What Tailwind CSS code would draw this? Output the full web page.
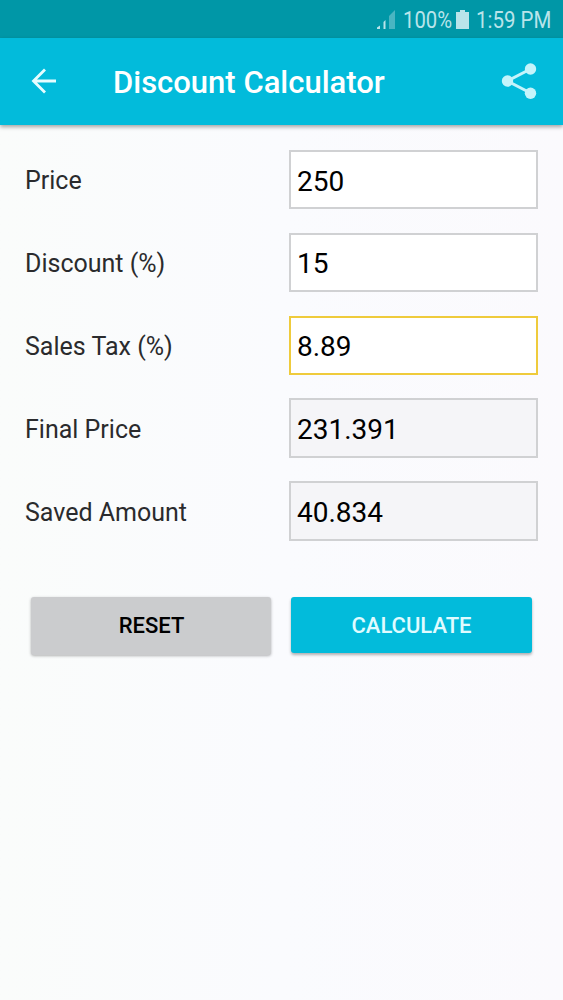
<!DOCTYPE html>
<html lang="en">
<head>
  <meta charset="UTF-8"/>
  <meta name="viewport" content="width=device-width, initial-scale=1.0"/>
  <title>Discount Calculator</title>
  <script src="https://cdn.jsdelivr.net/npm/@tailwindcss/browser@4"></script>
</head>
<body class="flex h-screen flex-col overflow-hidden bg-linear-to-r from-[#fafcfb] via-[#fafbfe] to-[#fbfafd] font-['Roboto',sans-serif] text-black">

  <!-- Status bar -->
  <div class="flex h-[38px] shrink-0 items-center justify-end bg-[#0097a7] pr-3 text-[#b9e4ea]">
    <svg class="mt-[2px] mr-[7px] h-[20px] w-[20px]" viewBox="0 0 20 20" fill="currentColor">
      <path d="M1 19v-1.500l3-2V19zM7.500 19v-7l2-2v9z"/>
      <path class="opacity-40" d="M13 19V6l6-6v19z"/>
    </svg>
    <span class="mt-[3px] w-[49px] origin-left scale-x-[0.88] text-[23px] leading-none whitespace-nowrap">100%</span>
    <svg class="mt-[1px] mr-[7px] ml-[4px] h-[19px] w-[13px]" viewBox="0 0 13 19" fill="currentColor">
      <path d="M4 0h5v2h4v17H0V2h4z"/>
    </svg>
    <span class="mt-[3px] w-[75px] origin-left scale-x-[0.89] text-[23px] leading-none whitespace-nowrap">1:59 PM</span>
  </div>

  <!-- App bar -->
  <header class="flex h-[87px] shrink-0 items-center bg-[#02bbdb] pr-[26px] pl-[31px] text-white shadow-[0_2px_4px_rgba(0,0,0,0.35)]">
    <svg class="mb-[1px] h-[26px] w-[26px]" viewBox="0 0 26 26" fill="none" stroke="#e6fdff" stroke-width="2.800">
      <path d="M25 13H2.500M14 1.500 2.500 13 14 24.500"/>
    </svg>
    <h1 class="mt-[2px] ml-[56px] flex-1 text-[31px] leading-none font-medium whitespace-nowrap">Discount Calculator</h1>
    <svg class="mb-[1px] h-[38px] w-[36px]" viewBox="0 0 36 38" fill="#c5f4fb" stroke="#c5f4fb">
      <path fill="none" stroke-width="3" d="M29.500 7 6.500 19l23 12"/>
      <circle cx="29.500" cy="7" r="5.700" stroke="none"/>
      <circle cx="6.500" cy="19" r="5.700" stroke="none"/>
      <circle cx="29.500" cy="31.300" r="5.700" stroke="none"/>
    </svg>
  </header>

  <main class="px-[25px] pt-[25px]">
    <div class="flex flex-col gap-[23.400px]">
      <div class="flex h-[59.400px] items-center">
        <label for="price" class="w-[264px] pt-[3px] text-[25px] text-[#2a2b2d]">Price</label>
        <input id="price" value="250" class="h-full min-w-0 flex-1 border-2 border-[#d0d1d3] bg-white px-[6px] pt-[3px] text-[28px] outline-none"/>
      </div>
      <div class="flex h-[59.400px] items-center">
        <label for="discount" class="w-[264px] pt-[3px] text-[25px] text-[#2a2b2d]">Discount (%)</label>
        <input id="discount" value="15" class="h-full min-w-0 flex-1 border-2 border-[#d0d1d3] bg-white px-[6px] pt-[3px] text-[28px] outline-none"/>
      </div>
      <div class="flex h-[59.400px] items-center">
        <label for="tax" class="w-[264px] pt-[3px] text-[25px] text-[#2a2b2d]">Sales Tax (%)</label>
        <input id="tax" value="8.89" class="h-full min-w-0 flex-1 border-2 border-[#efcb3c] bg-white px-[6px] pt-[3px] text-[28px] outline-none"/>
      </div>
      <div class="flex h-[59.400px] items-center">
        <label for="final" class="w-[264px] pt-[3px] text-[25px] text-[#2a2b2d]">Final Price</label>
        <input id="final" value="231.391" readonly class="h-full min-w-0 flex-1 border-2 border-[#d0d1d3] bg-[#f5f5f8] px-[6px] pt-[3px] text-[28px] outline-none"/>
      </div>
      <div class="flex h-[59.400px] items-center">
        <label for="saved" class="w-[264px] pt-[3px] text-[25px] text-[#2a2b2d]">Saved Amount</label>
        <input id="saved" value="40.834" readonly class="h-full min-w-0 flex-1 border-2 border-[#d0d1d3] bg-[#f5f5f8] px-[6px] pt-[3px] text-[28px] outline-none"/>
      </div>
    </div>

    <!-- Actions -->
    <div class="mt-[56px] flex gap-[20px] px-[6px]">
      <button class="h-[58px] w-[240px] rounded-[3px] bg-[#cbccce] pl-[1px] text-[22px] font-medium shadow-[0_1px_3px_rgba(0,0,0,0.3)]">RESET</button>
      <button class="h-[56px] w-[241px] rounded-[3px] bg-[#02bbdb] pt-[2px] text-[22px] font-medium text-[#e0fbff] shadow-[0_2px_3px_rgba(0,0,0,0.3)]">CALCULATE</button>
    </div>
  </main>
</body>
</html>
